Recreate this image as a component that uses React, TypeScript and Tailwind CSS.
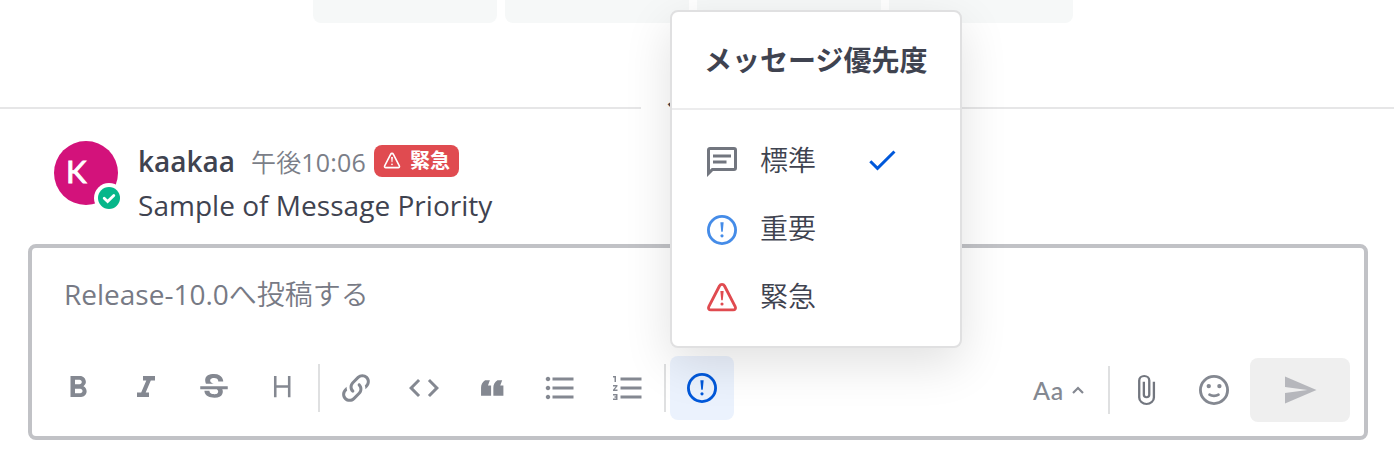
import React from "react";
import {
  MdFormatBold,
  MdFormatItalic,
  MdFormatListBulleted,
  MdFormatListNumbered,
} from "react-icons/md";

type IconProps = { className?: string };

function Svg({ className = "size-9", children }: { className?: string; children: React.ReactNode }) {
  return (
    <svg viewBox="0 0 24 24" fill="currentColor" className={`shrink-0 ${className}`}>
      {children}
    </svg>
  );
}

const StrikeIcon = () => (
  <Svg>
    <path
      transform="translate(2 1.4) scale(.833 .79)"
      d="M23,12V14.4H18.61C19.61,16.14 19.56,21.6 12.38,21.6C4.05,21.6 4.37,15.8 4.37,15.8L8.34,15.8C8.37,18.6 11.5,18.6 12.12,18.6C12.76,18.6 15.15,18.6 15.34,16.5C15.42,15.6 14.8,15 14.2,14.4H1V12H23M19.41,7.89L15.43,7.86C15.43,7.86 15.6,5.09 12.15,5.08C8.7,5.06 9,7.28 9,7.56C9.04,7.84 9.34,9.22 12,9.88H5.71C5.71,9.88 2.22,2.4 10.74,1.6C19.45,.8 19.43,7.91 19.41,7.89Z"
    />
  </Svg>
);

const HeadingIcon = () => (
  <Svg>
    <path d="M7.5 4v14.2M16.8 4v14.2M7.5 11h9.3" fill="none" stroke="currentColor" strokeWidth="1.7" />
  </Svg>
);

const LinkIcon = () => (
  <Svg>
    <path d="M10.59,13.41C11,13.8 11,14.44 10.59,14.83C10.2,15.22 9.56,15.22 9.17,14.83C7.22,12.88 7.22,9.71 9.17,7.76V7.76L12.71,4.22C14.66,2.27 17.83,2.27 19.78,4.22C21.73,6.17 21.73,9.34 19.78,11.29L18.29,12.78C18.3,11.96 18.17,11.14 17.89,10.36L18.36,9.88C19.54,8.71 19.54,6.81 18.36,5.64C17.19,4.46 15.29,4.46 14.12,5.64L10.59,9.17C9.41,10.34 9.41,12.24 10.59,13.41M13.41,9.17C13.8,8.78 14.44,8.78 14.83,9.17C16.78,11.12 16.78,14.29 14.83,16.24V16.24L11.29,19.78C9.34,21.73 6.17,21.73 4.22,19.78C2.27,17.83 2.27,14.66 4.22,12.71L5.71,11.22C5.7,12.04 5.83,12.86 6.11,13.65L5.64,14.12C4.46,15.29 4.46,17.19 5.64,18.36C6.81,19.54 8.71,19.54 9.88,18.36L13.41,14.83C14.59,13.66 14.59,11.76 13.41,10.59C13,10.2 13,9.56 13.41,9.17Z" />
  </Svg>
);

const CodeIcon = () => (
  <Svg>
    <path d="M14.6,16.6L19.2,12L14.6,7.4L16,6L22,12L16,18L14.6,16.6M9.4,16.6L4.8,12L9.4,7.4L8,6L2,12L8,18L9.4,16.6Z" />
  </Svg>
);

const QuoteIcon = () => (
  <Svg>
    <path d="M7.4 6.9h3.2L9.3 10.3h2.1v6.9H4.7v-5.4c0-2 .9-3.6 2.7-4.9zM15.6 6.9h3.2l-1.3 3.4h2.1v6.9h-6.7v-5.4c0-2 .9-3.6 2.7-4.9z" />
  </Svg>
);

const AlertCircleIcon = ({ className }: IconProps) => (
  <Svg className={className}>
    <circle cx="12" cy="12" r="9.05" fill="none" stroke="currentColor" strokeWidth="1.9" />
    <path d="M10.9 6.8h2.2l-.6 6.4h-1z" />
    <circle cx="12" cy="15.9" r="1.05" />
  </Svg>
);

const AlertTriangleIcon = ({ className }: IconProps) => (
  <Svg className={className}>
    <path
      d="M10.3 4 3.2 17.8c-.6 1.2.1 2.1 1.3 2.1h15c1.2 0 1.9-.9 1.3-2.1L13.7 4c-.8-1.5-2.6-1.5-3.4 0z"
      fill="none"
      stroke="currentColor"
      strokeWidth="1.9"
    />
    <path d="M10.9 7.3h2.2l-.6 6.2h-1z" />
    <circle cx="12" cy="16" r="1.05" />
  </Svg>
);

const MessageIcon = ({ className }: IconProps) => (
  <Svg className={className}>
    <path d="M20,2A2,2 0 0,1 22,4V16A2,2 0 0,1 20,18H6L2,22V4C2,2.89 2.9,2 4,2H20M4,4V17.17L5.17,16H20V4H4M6,7H18V9H6V7M6,11H15V13H6V11Z" />
  </Svg>
);

const CheckIcon = ({ className }: IconProps) => (
  <Svg className={className}>
    <path d="M21,7L9,19L3.5,13.5L4.91,12.09L9,16.17L19.59,5.59L21,7Z" />
  </Svg>
);

const PaperclipIcon = () => (
  <Svg className="size-9 text-[#72767f]">
    <path
      transform="translate(-.5 1.1) scale(1.03 .909)"
      d="M16.5,6V17.5A4,4 0 0,1 12.5,21.5A4,4 0 0,1 8.5,17.5V5A2.5,2.5 0 0,1 11,2.5A2.5,2.5 0 0,1 13.5,5V15.5A1,1 0 0,1 12.5,16.5A1,1 0 0,1 11.5,15.5V6H10V15.5A2.5,2.5 0 0,0 12.5,18A2.5,2.5 0 0,0 15,15.5V5A4,4 0 0,0 11,1A4,4 0 0,0 7,5V17.5A5.5,5.5 0 0,0 12.5,23A5.5,5.5 0 0,0 18,17.5V6H16.5Z"
    />
  </Svg>
);

const SmileyIcon = () => (
  <Svg>
    <circle cx="12" cy="12" r="9.05" fill="none" stroke="currentColor" strokeWidth="1.9" />
    <circle cx="8.5" cy="9.4" r="1.45" />
    <circle cx="15.6" cy="9.4" r="1.45" />
    <path d="M9 15.1c1.6 1.1 4.4 1.1 6 0" fill="none" stroke="currentColor" strokeWidth="1.8" strokeLinecap="round" />
  </Svg>
);

const SendIcon = () => (
  <Svg>
    <path d="M2,21L23,12L2,3V10L17,12L2,14V21Z" />
  </Svg>
);

function ToolButton({ active, children }: { active?: boolean; children: React.ReactNode }) {
  return (
    <button
      className={`flex size-16 shrink-0 items-center justify-center rounded-lg ${
        active ? "bg-[#ebf2fd] text-[#0058da]" : ""
      }`}
    >
      {children}
    </button>
  );
}

const Separator = () => <div className="h-12 w-0.5 shrink-0 bg-[#dfe0e1]" />;

function PriorityItem({ icon, label, checked }: { icon: React.ReactNode; label: string; checked?: boolean }) {
  return (
    <li className="flex h-[68px] items-center pl-8">
      <span className="pt-[3px]">{icon}</span>
      <span className="ml-5 w-[104px] text-[28px] font-[350] leading-10">{label}</span>
      {checked && <CheckIcon className="size-9 text-[#0058da]" />}
    </li>
  );
}

function PriorityMenu() {
  return (
    <div className="absolute left-[670px] top-[10px] h-[338px] w-[292px] rounded-lg border-2 border-[#e0e0e1] bg-white shadow-[0_16px_48px_rgba(0,0,0,0.12)]">
      <h2 className="flex h-[98px] items-center border-b-2 border-[#ececed] pl-8 text-[28px] font-semibold">
        メッセージ優先度
      </h2>
      <ul className="pt-4">
        <PriorityItem icon={<MessageIcon className="size-9 text-[#72767f]" />} label="標準" checked />
        <PriorityItem icon={<AlertCircleIcon className="size-9 text-[#458ce8]" />} label="重要" />
        <PriorityItem icon={<AlertTriangleIcon className="size-9 text-[#e04b50]" />} label="緊急" />
      </ul>
    </div>
  );
}

function Post() {
  return (
    <article className="flex h-[135px] pl-[54px] pt-8">
      <div className="relative size-16 shrink-0 rounded-full bg-[#d3127b]">
        <span className="absolute left-[12px] top-[10px] font-['Lato'] text-[31px] font-normal leading-10 text-white [-webkit-text-stroke:0.9px_white]">
          K
        </span>
        <span className="absolute left-10 top-[42px] flex size-[30px] items-center justify-center rounded-full bg-white">
          <svg viewBox="0 0 22 22" className="size-[22px]">
            <circle cx="11" cy="11" r="11" fill="#06b78a" />
            <path d="m6.2 11.3 3.4 3.3 6.2-6.2" fill="none" stroke="#fff" strokeWidth="2.8" strokeLinecap="round" />
          </svg>
        </span>
      </div>
      <div className="ml-5">
        <header className="flex h-10 items-center">
          <strong className="text-[28px] font-semibold leading-10">kaakaa</strong>
          <time className="ml-4 w-[123px] whitespace-nowrap pt-0.5 text-[25px] font-[350] leading-10 tracking-[0.15px] text-[#7b7e88]">
            午後<span className="font-normal">10:06</span>
          </time>
          <span className="flex h-8 w-[85px] items-center rounded-lg bg-[#e04b50] pl-2 text-white">
            <AlertTriangleIcon className="size-5" />
            <span className="ml-2 text-[20px] font-bold leading-8">緊急</span>
          </span>
        </header>
        <p className="mt-1 text-[28px] leading-10 tracking-[0.03px]">Sample of Message Priority</p>
      </div>
    </article>
  );
}

function Composer() {
  return (
    <section className="mx-[28px] flex h-[196px] w-[1340px] flex-col justify-between rounded-lg border-4 border-[#c1c2c6]">
      <p className="pl-8 pt-[26px] text-[28px] leading-10 text-[#777a85]">
        Release-10.0<span className="font-[350]">へ投稿する</span>
      </p>
      <div className="flex justify-between pl-[14px] pr-[14px] text-[#848891]">
        <div className="mb-4 flex items-center gap-1">
          <ToolButton><MdFormatBold size={36} /></ToolButton>
          <ToolButton><MdFormatItalic size={36} /></ToolButton>
          <ToolButton><StrikeIcon /></ToolButton>
          <ToolButton><HeadingIcon /></ToolButton>
          <Separator />
          <ToolButton><LinkIcon /></ToolButton>
          <ToolButton><CodeIcon /></ToolButton>
          <ToolButton><QuoteIcon /></ToolButton>
          <ToolButton><MdFormatListBulleted size={36} /></ToolButton>
          <ToolButton><MdFormatListNumbered size={36} /></ToolButton>
          <Separator />
          <ToolButton active><AlertCircleIcon /></ToolButton>
        </div>
        <div className="mb-[14px] mt-0.5 flex items-center gap-1">
          <button className="flex h-16 w-[71px] items-center">
            <span className="w-[31px] font-['Lato'] text-[25px] font-medium leading-10 tracking-[0.8px]">Aa</span>
            <svg viewBox="0 0 12 8" className="ml-2 h-2 w-3">
              <path d="m1 7 5-5 5 5" fill="none" stroke="currentColor" strokeWidth="2.2" />
            </svg>
          </button>
          <Separator />
          <ToolButton><PaperclipIcon /></ToolButton>
          <ToolButton><SmileyIcon /></ToolButton>
          <button className="flex h-16 w-[100px] items-center justify-center rounded-lg bg-[#efefef] text-[#b6b7bc]">
            <SendIcon />
          </button>
        </div>
      </div>
    </section>
  );
}

export default function App() {
  return (
    <main
      lang="ja"
      className="relative flex h-[466px] w-[1394px] flex-col overflow-hidden bg-white font-['Open_Sans','Noto_Sans_CJK_JP',sans-serif] text-[#3f4350]"
    >
      <div className="flex h-[23px] gap-2 pl-[313px]">
        <div className="w-[184px] rounded-b-lg bg-[#f6f8f8]" />
        <div className="w-[184px] rounded-b-lg bg-[#f6f8f8]" />
        <div className="w-[184px] rounded-b-lg bg-[#f6f8f8]" />
        <div className="w-[184px] rounded-b-lg bg-[#f6f8f8]" />
      </div>
      <div className="mt-[65px] flex h-[40px] shrink-0 items-center">
        <div className="h-0.5 flex-1 bg-[#e6e6e7]" />
        <span className="w-[112px] pb-0.5 pl-[26px] text-[28px] font-semibold leading-10">今日</span>
        <div className="h-0.5 flex-1 bg-[#e6e6e7]" />
      </div>
      <div className="-mt-[19px]">
        <Post />
      </div>
      <Composer />
      <PriorityMenu />
    </main>
  );
}
